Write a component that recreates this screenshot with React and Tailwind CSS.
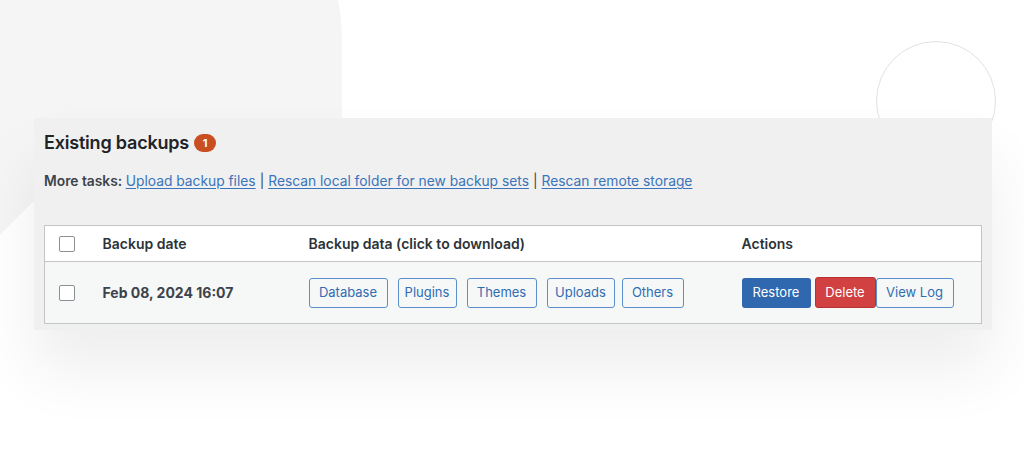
import React from "react";

const Checkbox = () => (
  <span className="block h-4 w-4 rounded-[2px] border border-[#8c8f94] bg-white" />
);

const FileButton = ({ className = "", children }) => (
  <button
    className={`h-[30px] rounded-[3px] border border-[#5a8fcb] bg-[#f6f7f7] text-center text-[13px] text-[#2f6db3] ${className}`}
  >
    {children}
  </button>
);

const Sep = () => <span className="mx-[4px] text-[#3c434a]">|</span>;

const TaskLink = ({ children }) => (
  <a href="#" className="text-[#3a74ba] underline underline-offset-2">
    {children}
  </a>
);

export default function App() {
  return (
    <div className="relative h-[451px] w-[1024px] overflow-hidden bg-white font-['Inter',sans-serif]">
      {/* background decoration */}
      <div className="absolute left-[-260px] top-[-160px] h-[360px] w-[602px] rounded-tr-[200px] rounded-br-[20px] bg-[#f5f5f6]" />
      <div className="absolute left-[-210px] top-[1px] h-[260px] w-[260px] rotate-45 rounded-[40px] bg-[#f5f5f6]" />
      <div className="absolute left-[876px] top-[41px] h-[120px] w-[120px] rounded-full border border-[#e2e2e4] bg-white" />

      <div className="relative pl-[34px] pt-[118px]">
        <div className="h-[212px] w-[958px] bg-[#f0f0f1] px-[10px] pt-[13px] shadow-[0_40px_60px_rgba(0,0,0,0.07)]">
          <div className="flex items-center">
            <h2 className="text-[18px] font-semibold leading-[24px] tracking-[-0.2px] text-[#1d2327]">
              Existing backups
            </h2>
            <span className="ml-[5px] flex h-[18px] min-w-[22px] items-center justify-center rounded-full bg-[#c94f22] px-[6px] text-[11px] font-bold leading-none text-white">
              1
            </span>
          </div>

          <div className="mt-[16px] text-[13.8px] leading-[20px] text-[#3c434a]">
            <span className="font-semibold">More tasks: </span>
            <TaskLink>Upload backup files</TaskLink>
            <Sep />
            <TaskLink>Rescan local folder for new backup sets</TaskLink>
            <Sep />
            <TaskLink>Rescan remote storage</TaskLink>
          </div>

          <table className="mt-[34px] w-[938px] table-fixed border-collapse border border-[#c3c4c7] text-[14px] text-[#2c3338]">
            <colgroup>
              <col className="w-[48px]" />
              <col className="w-[206px]" />
              <col className="w-[433px]" />
              <col />
            </colgroup>
            <thead>
              <tr className="h-[36px] border-b border-[#c3c4c7] bg-white">
                <th className="pl-[14px] text-left align-middle">
                  <Checkbox />
                </th>
                <th className="pl-[10px] text-left font-semibold">Backup date</th>
                <th className="pl-[10px] text-left font-semibold">
                  Backup data (click to download)
                </th>
                <th className="pl-[10px] text-left font-semibold">Actions</th>
              </tr>
            </thead>
            <tbody>
              <tr className="h-[62px] bg-[#f6f7f7]">
                <td className="pl-[14px] align-middle">
                  <Checkbox />
                </td>
                <td className="pl-[10px] font-bold text-[#3c434a]">
                  Feb 08, 2024 16:07
                </td>
                <td className="pl-[10px]">
                  <div className="flex">
                    <FileButton className="w-[79px]">Database</FileButton>
                    <FileButton className="ml-[10px] w-[59px]">Plugins</FileButton>
                    <FileButton className="ml-[10px] w-[70px]">Themes</FileButton>
                    <FileButton className="ml-[10px] w-[68px]">Uploads</FileButton>
                    <FileButton className="ml-[7px] w-[62px]">Others</FileButton>
                  </div>
                </td>
                <td className="pl-[10px]">
                  <div className="flex items-center">
                    <button className="h-[30px] w-[69px] rounded-[3px] bg-[#2f68ae] text-[13px] text-white">
                      Restore
                    </button>
                    <button className="ml-[4px] h-[31px] w-[61px] rounded-[3px] border border-[#b83030] bg-[#d24141] text-[13px] text-white">
                      Delete
                    </button>
                    <FileButton className="w-[78px]">View Log</FileButton>
                  </div>
                </td>
              </tr>
            </tbody>
          </table>
        </div>
      </div>
    </div>
  );
}
